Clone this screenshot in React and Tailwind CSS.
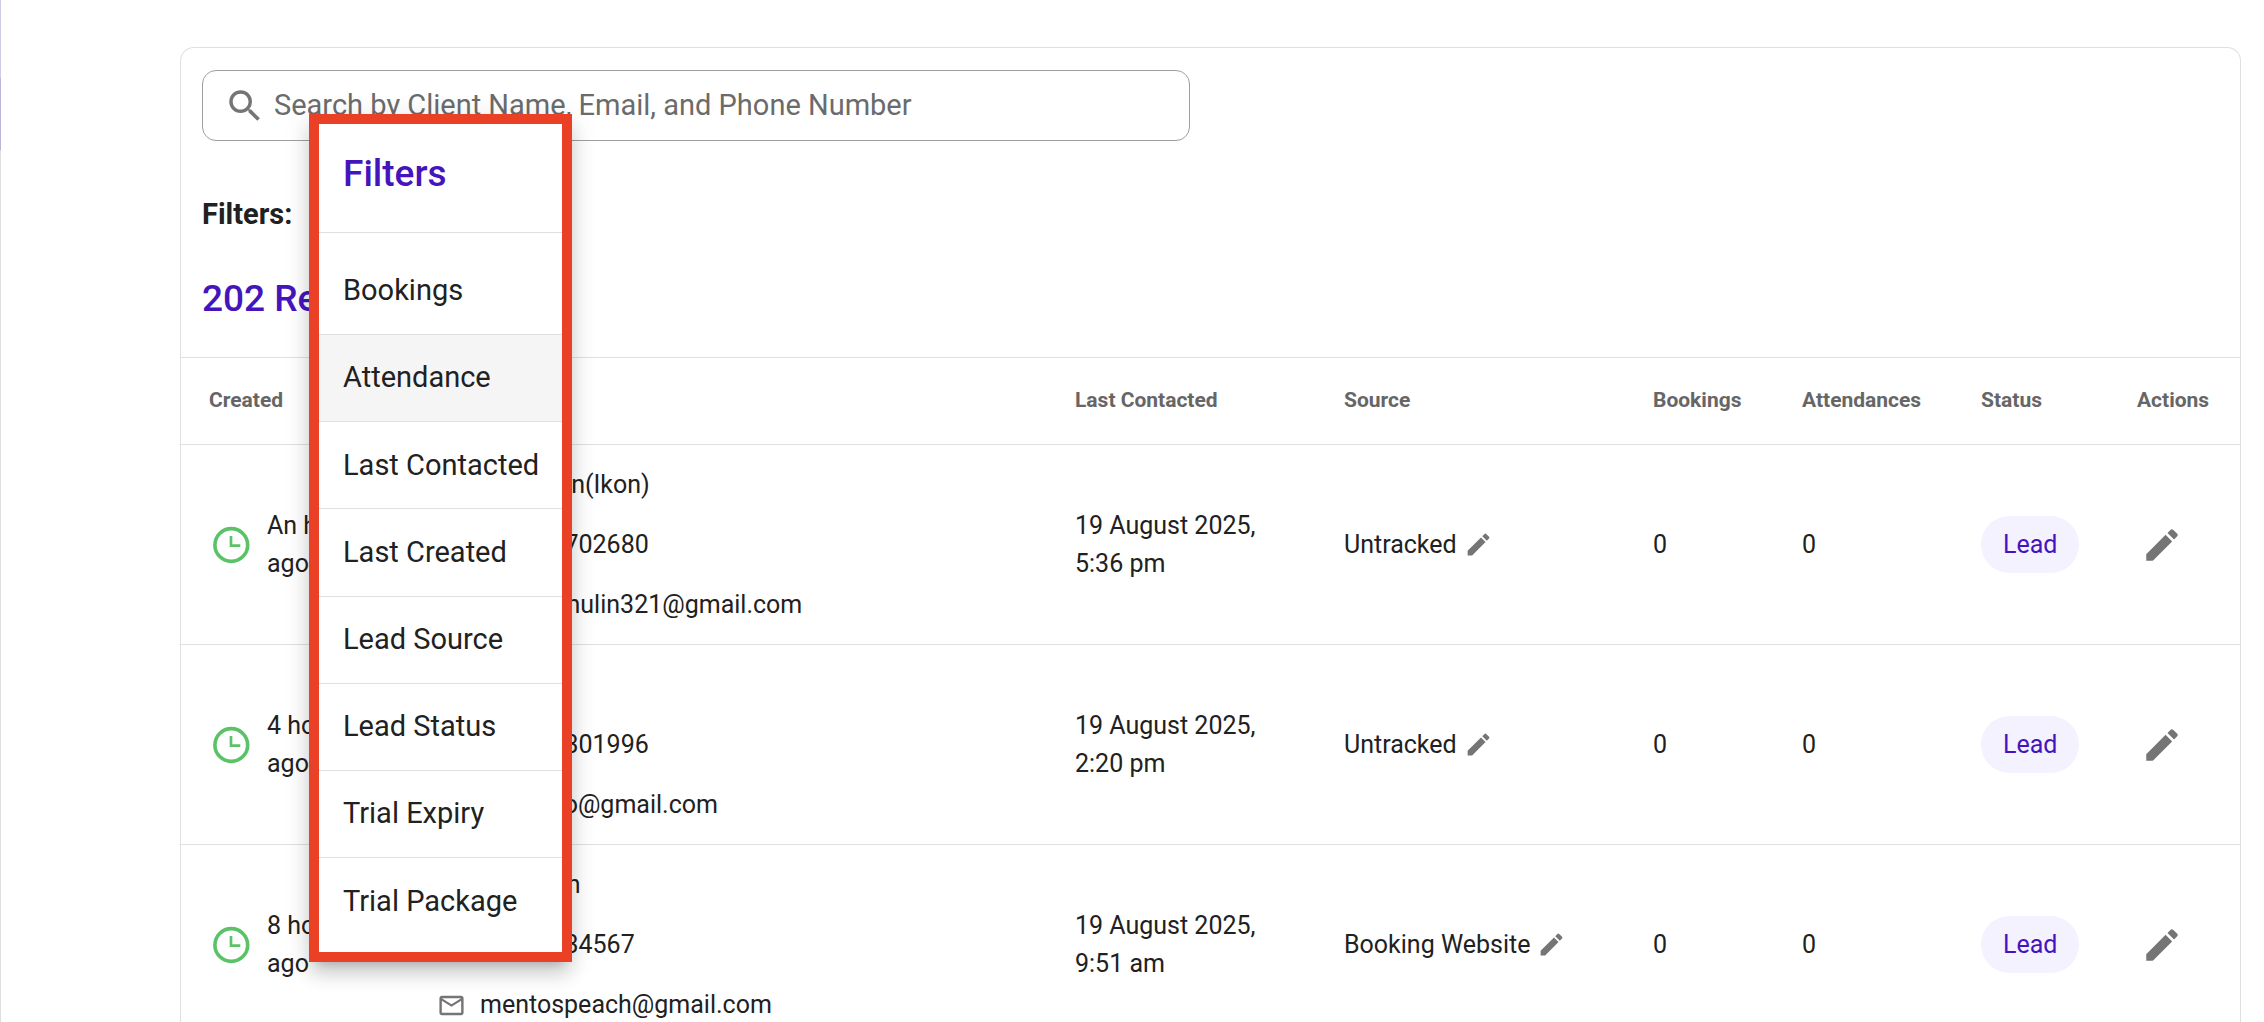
import React, { useState } from 'react';
import { MdSearch, MdEdit, MdMailOutline, MdPhone, MdPersonOutline } from 'react-icons/md';

const filterOptions = [
  'Bookings',
  'Attendance',
  'Last Contacted',
  'Last Created',
  'Lead Source',
  'Lead Status',
  'Trial Expiry',
  'Trial Package',
];

const leads = [
  {
    id: 1,
    created: 'An hour ago',
    name: 'Kim Loan(Ikon)',
    phone: '+61400702680',
    email: 'kimlzhanulin321@gmail.com',
    contacted: ['19 August 2025,', '5:36 pm'],
    source: 'Untracked',
  },
  {
    id: 2,
    created: '4 hours ago',
    name: 'Leo',
    phone: '+61411301996',
    email: 'leomarlo@gmail.com',
    contacted: ['19 August 2025,', '2:20 pm'],
    source: 'Untracked',
  },
  {
    id: 3,
    created: '8 hours ago',
    name: 'Ben Aran',
    phone: '+6141234567',
    email: 'mentospeach@gmail.com',
    contacted: ['19 August 2025,', '9:51 am'],
    source: 'Booking Website',
  },
];

const ClockIcon = () => (
  <svg viewBox="0 0 38 38" className="size-[38px] shrink-0" fill="none" stroke="#5cc268">
    <circle cx="19.3" cy="19" r="16.4" strokeWidth="3.6" />
    <path d="M19 10v9.6h9.3" strokeWidth="2.7" />
  </svg>
);

const ContactLine = ({ icon: Icon, children }) => (
  <div className="flex h-15 items-center gap-[14px]">
    <Icon className="shrink-0 text-[#757575]" size={29} />
    <span>{children}</span>
  </div>
);

const FilterMenu = ({ active, onSelect }) => (
  <div className="absolute left-[138px] top-[76px] z-10 w-[243px] bg-white outline-[10px] outline-[#ea4025] shadow-[0_9px_9px_1px_rgba(0,0,0,0.2),0_14px_18px_8px_rgba(0,0,0,0.14),0_5px_25px_10px_rgba(0,0,0,0.12)]">
    <h2 className="border-b border-[#e0e0e0] px-6 pt-6 pb-8 text-[37px] leading-[52px] font-medium text-[#4614bd]">
      Filters
    </h2>
    <ul className="grid h-[719px] auto-rows-fr pt-[15px] pb-[7px]">
      {filterOptions.map((option) => (
        <li key={option} className="border-b border-[#e0e0e0] last:border-b-0">
          <button
            type="button"
            onClick={() => onSelect(option)}
            className={`h-full w-full px-6 text-left text-[29px] whitespace-nowrap ${
              option === active ? 'bg-[#f5f5f5]' : 'bg-white'
            }`}
          >
            {option}
          </button>
        </li>
      ))}
    </ul>
  </div>
);

const App = () => {
  const [search, setSearch] = useState('');
  const [active, setActive] = useState('Attendance');

  return (
    <div className="h-screen overflow-hidden border-l border-[#dedede] bg-white pt-[47px] pr-[23px] pl-[179px] font-['Roboto',sans-serif] text-[#212121]">
      {/* Edge of the sidebar */}
      <div className="absolute top-0 left-0 flex h-[150px] w-px items-end bg-[#d0cbe4]">
        <div className="h-[72px] w-px bg-[#bdb3dc]"></div>
      </div>

      <div className="relative rounded-t-[14px] border border-b-0 border-[#e0e0e0]">
        <div className="px-[21px] pt-[22px]">
          <label className="flex h-[71px] w-[49%] items-center gap-2 rounded-[14px] border border-[#9e9e9e] px-[21px]">
            <MdSearch className="shrink-0 text-[#757575]" size={42} />
            <input
              type="text"
              aria-label="Search clients"
              value={search}
              onChange={(e) => setSearch(e.target.value)}
              placeholder="Search by Client Name, Email, and Phone Number"
              className="w-full text-[29px] outline-none placeholder:text-[#6b6b6b]"
            />
          </label>
          <p className="mt-[53px] text-[29px] leading-10 font-bold">Filters:</p>
          <h1 className="mt-[45px] mb-[38px] text-[37px] leading-10 font-medium text-[#4614bd]">202 Results</h1>
        </div>

        <FilterMenu active={active} onSelect={setActive} />

        <table className="w-full table-fixed border-t border-[#e0e0e0] text-left text-[25px]">
          <thead>
            <tr className="h-[87px] border-b border-[#e0e0e0] text-[21px] text-[#666666]">
              <th className="w-[228px] pl-7 font-bold">Created</th>
              <th className="pl-7 font-bold">Client</th>
              <th className="w-[269px] pl-7 font-bold">Last Contacted</th>
              <th className="w-[309px] pl-7 font-bold">Source</th>
              <th className="w-[149px] pl-7 font-bold">Bookings</th>
              <th className="w-[179px] pl-7 font-bold">Attendances</th>
              <th className="w-[156px] pl-7 font-bold">Status</th>
              <th className="w-[131px] pl-7 font-bold">Actions</th>
            </tr>
          </thead>
          <tbody>
            {leads.map((lead) => (
              <tr key={lead.id} className="border-b border-[#e0e0e0]">
                <td className="pl-[31px]">
                  <div className="flex items-center gap-[17px]">
                    <ClockIcon />
                    <span className="w-[100px] leading-[38px]">{lead.created}</span>
                  </div>
                </td>
                <td className="pt-[10px] pb-[9px] pl-7">
                  <ContactLine icon={MdPersonOutline}>{lead.name}</ContactLine>
                  <ContactLine icon={MdPhone}>{lead.phone}</ContactLine>
                  <ContactLine icon={MdMailOutline}>{lead.email}</ContactLine>
                </td>
                <td className="pl-7 leading-[38px]">
                  {lead.contacted[0]}
                  <br />
                  {lead.contacted[1]}
                </td>
                <td className="pl-7">
                  <div className="flex items-center gap-[7px]">
                    {lead.source}
                    <button type="button" aria-label="Edit source">
                      <MdEdit className="text-[#757575]" size={29} />
                    </button>
                  </div>
                </td>
                <td className="pl-7">0</td>
                <td className="pl-7">0</td>
                <td className="pl-7">
                  <span className="inline-flex h-[57px] items-center rounded-full bg-[#f4f2fe] px-[22px] text-[#4614bd]">
                    Lead
                  </span>
                </td>
                <td className="pl-8">
                  <button type="button" aria-label="Edit lead" className="block">
                    <MdEdit className="text-[#757575]" size={42} />
                  </button>
                </td>
              </tr>
            ))}
          </tbody>
        </table>
      </div>
    </div>
  );
};

export default App;
